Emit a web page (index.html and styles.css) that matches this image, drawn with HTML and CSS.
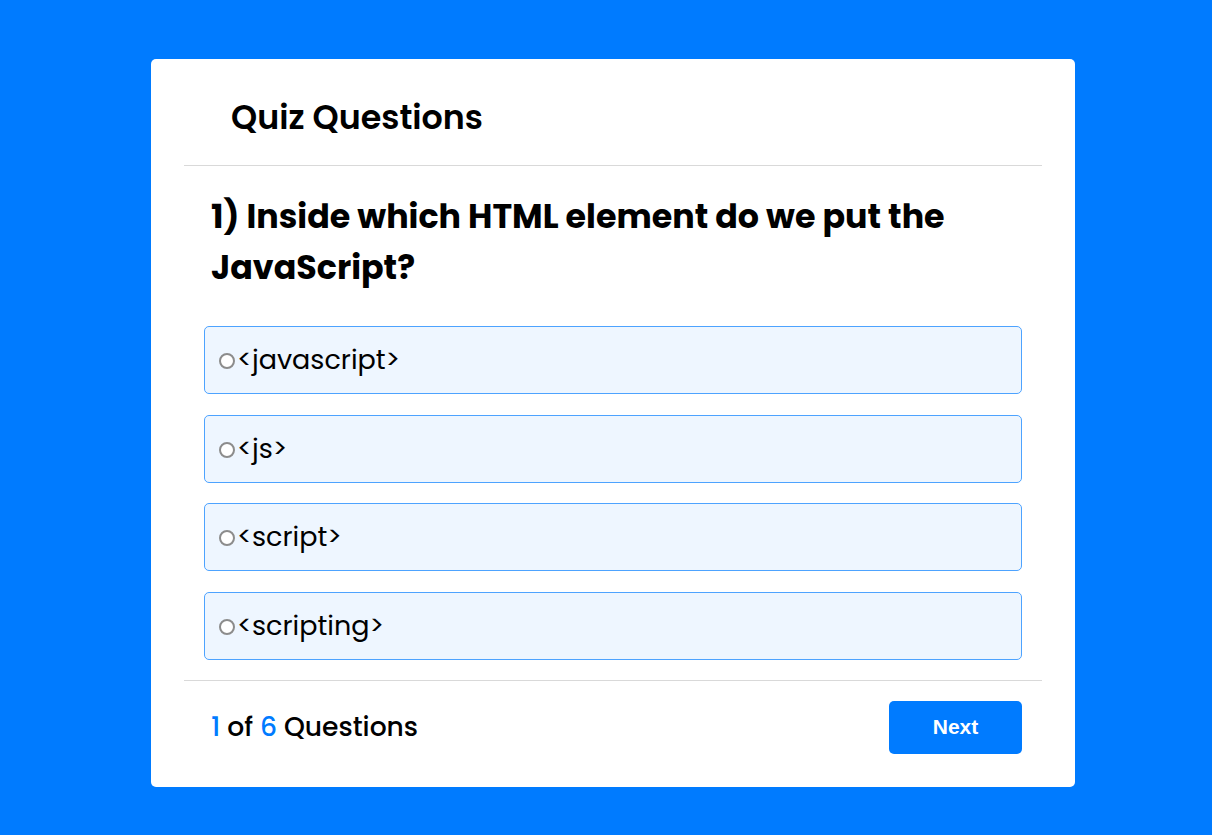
FILE: index.html
```html
<!DOCTYPE html>
<html lang="en">

<head>
    <meta charset="UTF-8">
    <meta name="viewport" content="width=device-width, initial-scale=1.0">
    <title>Quiz Questions</title>
    <link rel="stylesheet" href="styles.css">
</head>

<body>
    <div class="quiz-container">
        <div class="quiz-header">
            <h1>Quiz Questions</h1>
        </div>

        <div class="quiz-body">
            <h2 class="question">1) Inside which HTML element do we put the JavaScript?</h2>

            <ul class="options">
                <li class="option">
                    <label><input type="radio" name="answer" value="javascript">&lt;javascript&gt;</label>
                </li>
                <li class="option">
                    <label><input type="radio" name="answer" value="js">&lt;js&gt;</label>
                </li>
                <li class="option">
                    <label><input type="radio" name="answer" value="script">&lt;script&gt;</label>
                </li>
                <li class="option">
                    <label><input type="radio" name="answer" value="scripting">&lt;scripting&gt;</label>
                </li>
            </ul>
        </div>

        <div class="quiz-footer">
            <p class="question-count"><span>1</span> of <span>6</span> Questions</p>
            <button type="button" class="next-btn">Next</button>
        </div>
    </div>
</body>

</html>
```

FILE: styles.css
```css
* {
    margin: 0;
    padding: 0;
    box-sizing: border-box;
}

body {
    font-family: "Poppins", "Inter", "Noto Sans", sans-serif;
    background-color: #007bff;
    color: #000;
    display: flex;
    justify-content: center;
    align-items: flex-start;
    min-height: 100vh;
    padding-left: 14px;
}

.quiz-container {
    width: 924px;
    margin-top: 59px;
    background: #fff;
    border-radius: 5px;
    padding: 0 33px 33px;
}

.quiz-header {
    height: 107px;
    display: flex;
    align-items: center;
    padding: 11px 0 0 47px;
    border-bottom: 1px solid #d9d9d9;
}

.quiz-header h1 {
    font-size: 33.3px;
    font-weight: 600;
}

.quiz-body {
    padding: 25px 20px 20px;
    border-bottom: 1px solid #d9d9d9;
}

.question {
    font-size: 33.3px;
    font-weight: 700;
    line-height: 51px;
    padding: 0 7px;
    margin-bottom: 33px;
}

.options {
    list-style: none;
    display: flex;
    flex-direction: column;
    gap: 20.67px;
}

.option label {
    display: flex;
    align-items: center;
    height: 68px;
    padding: 0 9px;
    background: #eef6ff;
    border: 1px solid #4da3ff;
    border-radius: 5px;
    font-size: 27px;
    cursor: pointer;
}

.option input {
    appearance: none;
    -webkit-appearance: none;
    flex: 0 0 16px;
    width: 16px;
    height: 16px;
    margin: 2px 2px 0 5px;
    border: 2px solid #8c8c8c;
    border-radius: 50%;
    background: #fff;
    cursor: pointer;
}

.option input:checked {
    border: 5px solid #007bff;
}

.quiz-footer {
    display: flex;
    justify-content: space-between;
    align-items: center;
    padding: 20px 20px 0 27px;
}

.question-count {
    font-size: 26.6px;
    font-weight: 500;
}

.question-count span {
    color: #007bff;
}

.next-btn {
    width: 133px;
    height: 53px;
    background-color: #007bff;
    color: #fff;
    border: none;
    border-radius: 5px;
    font-family: "Liberation Sans", Arial, sans-serif;
    font-size: 21px;
    font-weight: bold;
    cursor: pointer;
}

.next-btn:hover {
    background-color: #0069d9;
}
```
